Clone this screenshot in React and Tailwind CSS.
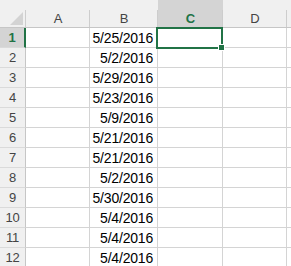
import React from 'react';

const dates = [
  '5/25/2016', '5/2/2016', '5/29/2016', '5/23/2016', '5/9/2016', '5/21/2016',
  '5/21/2016', '5/2/2016', '5/30/2016', '5/4/2016', '5/4/2016', '5/4/2016',
];

const cols = [
  { name: 'A', w: 'w-[64px]' },
  { name: 'B', w: 'w-[68px]' },
  { name: 'C', w: 'w-[65px]', active: true },
  { name: 'D', w: 'w-[64px]' },
];

const sep = "relative after:absolute after:right-0 after:top-[10px] after:bottom-0 after:w-px after:bg-[#cdcdcd]";

function HeaderRow() {
  return (
    <div className="flex h-[28px] bg-[#f0f0f0] border-b border-[#c6c6c6]">
      {/* corner */}
      <div className={`w-[26px] shrink-0 ${sep}`}>
        <svg className="absolute left-[10px] top-[12px]" width="13" height="13" viewBox="0 0 13 13">
          <polygon points="13,0 13,13 0,13" fill="#d3d3d3" />
        </svg>
      </div>
      {cols.map((c) => (
        <div
          key={c.name}
          className={`${c.w} shrink-0 text-center text-[13px] leading-[16px] pt-[11px] ${sep} ${
            c.active ? 'bg-[#d4d4d4] text-[#217346] font-bold' : 'text-[#444]'
          }`}
        >
          {c.name}
        </div>
      ))}
      <div className="flex-1" />
    </div>
  );
}

function DataRow({ n, date }) {
  const active = n === 1;
  return (
    <div className="flex h-[20px]">
      <div
        className={`w-[26px] shrink-0 flex items-center justify-center text-[13px] tracking-[-0.3px] border-b border-[#dadada] ${
          active
            ? 'bg-[#d4d4d4] text-[#217346] font-bold border-r-2 border-r-[#217346]'
            : 'bg-[#f0f0f0] text-[#444] border-r border-r-[#c6c6c6]'
        }`}
      >
        {n}
      </div>
      <div className="w-[64px] shrink-0 border-r border-b border-[#d4d4d4]" />
      <div className="w-[68px] shrink-0 border-r border-b border-[#d4d4d4] flex items-center justify-end pr-[4px] pt-[1px] text-[14px] tracking-[-0.2px] text-black">
        {date}
      </div>
      <div className="w-[65px] shrink-0 border-r border-b border-[#d4d4d4]" />
      <div className="w-[64px] shrink-0 border-r border-b border-[#d4d4d4]" />
      <div className="flex-1 border-b border-[#d4d4d4]" />
    </div>
  );
}

export default function App() {
  return (
    <div
      className="relative w-[291px] h-[266px] overflow-hidden bg-white"
      style={{ fontFamily: '"Liberation Sans", Arial, sans-serif' }}
    >
      <HeaderRow />
      {dates.map((d, i) => (
        <DataRow key={i} n={i + 1} date={d} />
      ))}
      {/* active cell selection */}
      <div className="absolute left-[156px] top-[27px] w-[67px] h-[22px] border-2 border-[#217346]" />
      <div className="absolute left-[218px] top-[44px] w-[7px] h-[7px] bg-[#217346] border border-white" />
    </div>
  );
}
